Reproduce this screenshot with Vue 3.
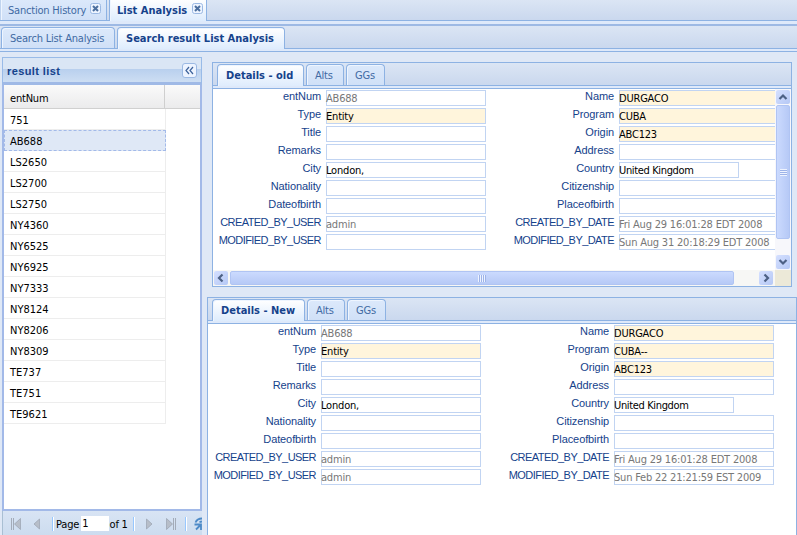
<script setup>
const rows = ['751', 'AB688', 'LS2650', 'LS2700', 'LS2750', 'NY4360', 'NY6525', 'NY6925', 'NY7333', 'NY8124', 'NY8206', 'NY8309', 'TE737', 'TE751', 'TE9621']

const buildFields = (v) => [
  { label: 'entNum', value: 'AB688', kind: 'disabled' },
  { label: 'Name', value: 'DURGACO', kind: 'required' },
  { label: 'Type', value: 'Entity', kind: 'required' },
  { label: 'Program', value: v.program, kind: 'required' },
  { label: 'Title', value: '' },
  { label: 'Origin', value: 'ABC123', kind: 'required' },
  { label: 'Remarks', value: '' },
  { label: 'Address', value: '' },
  { label: 'City', value: 'London,' },
  { label: 'Country', value: 'United Kingdom', kind: 'short' },
  { label: 'Nationality', value: '' },
  { label: 'Citizenship', value: '' },
  { label: 'Dateofbirth', value: '' },
  { label: 'Placeofbirth', value: '' },
  { label: 'CREATED_BY_USER', value: 'admin', kind: 'disabled caps' },
  { label: 'CREATED_BY_DATE', value: 'Fri Aug 29 16:01:28 EDT 2008', kind: 'disabled caps' },
  { label: 'MODIFIED_BY_USER', value: v.modifiedBy, kind: 'disabled caps' },
  { label: 'MODIFIED_BY_DATE', value: v.modifiedDate, kind: 'disabled caps' }
]

const panels = [
  { id: 'old', title: 'Details - old', scroll: true, fields: buildFields({ program: 'CUBA', modifiedBy: '', modifiedDate: 'Sun Aug 31 20:18:29 EDT 2008' }) },
  { id: 'new', title: 'Details - New', scroll: false, fields: buildFields({ program: 'CUBA--', modifiedBy: 'admin', modifiedDate: 'Sun Feb 22 21:21:59 EST 2009' }) }
]
</script>

<template>
  <div class="app">
    <div class="strip main-strip">
      <div class="tab t-history"><span>Sanction History</span>
        <svg class="close" viewBox="0 0 11 11"><rect x=".5" y=".5" width="10" height="10" rx="2" /><path d="M3 3l5 5M8 3l-5 5" /></svg>
      </div>
      <div class="tab active t-list"><span>List Analysis</span>
        <svg class="close" viewBox="0 0 11 11"><rect x=".5" y=".5" width="10" height="10" rx="2" /><path d="M3 3l5 5M8 3l-5 5" /></svg>
      </div>
    </div>
    <div class="spacer main-spacer"></div>
    <div class="strip sub-strip">
      <div class="tab t-search"><span>Search List Analysis</span></div>
      <div class="tab active t-result"><span>Search result List Analysis</span></div>
    </div>
    <div class="spacer"></div>

    <div class="body">
      <aside class="side">
        <header class="side-head">
          <span>result list</span>
          <svg class="collapse" viewBox="0 0 15 15"><rect x=".5" y=".5" width="14" height="14" rx="2.5" /><path d="M7 4L4 7.5 7 11M11 4L8 7.5 11 11" /></svg>
        </header>
        <div class="grid">
          <div class="grid-head"><span class="col">entNum</span></div>
          <div v-for="r in rows" :key="r" class="row" :class="{ selected: r === 'AB688' }">{{ r }}</div>
        </div>
        <footer class="paging">
          <svg class="nav first" viewBox="0 0 12 12"><path class="bar" d="M1.5 0v12M3.5 0v12" /><path class="tri" d="M10.5 .5v11L4.5 6z" /></svg>
          <svg class="nav prev" viewBox="0 0 12 12"><path class="tri" d="M8.5 1v10L3 6z" /></svg>
          <i class="sep"></i>
          <span class="page">Page</span><span class="page-no">1</span><span class="of">of 1</span>
          <i class="sep"></i>
          <svg class="nav next" viewBox="0 0 12 12"><path class="tri" d="M3.5 1v10L9 6z" /></svg>
          <svg class="nav last" viewBox="0 0 12 12"><path class="tri" d="M1.5 .5v11l6-5.500z" /><path class="bar" d="M8.500 0v12M10.500 0v12" /></svg>
          <i class="sep"></i>
          <svg class="refresh" viewBox="0 0 8 14"><path d="M8 1.500C5 1.500 2.500 3 1.500 5.500M.5 7.500h6.500V13M6.500 8L2 12.500" /><path d="M8 4.500L5.500 5" /></svg>
        </footer>
      </aside>

      <main class="details">
        <section v-for="p in panels" :key="p.id" class="panel" :class="p.id">
          <div class="strip panel-strip">
            <div class="tab active t-details"><span>{{ p.title }}</span></div>
            <div class="tab t-alts"><span>Alts</span></div>
            <div class="tab t-ggs"><span>GGs</span></div>
          </div>
          <div class="spacer"></div>
          <div class="viewport">
            <div class="form-clip">
              <div class="form">
                <div v-for="f in p.fields" :key="f.label" class="field" :class="f.kind">
                  <label>{{ f.label }}</label>
                  <div class="input">{{ f.value }}</div>
                </div>
              </div>
            </div>
            <template v-if="p.scroll">
              <div class="vbar">
                <svg class="sbtn" viewBox="0 0 14 14"><path d="M3.500 9L7 5.500 10.500 9" /></svg>
                <div class="thumb vthumb"><i></i></div>
                <svg class="sbtn end" viewBox="0 0 14 14"><path d="M3.500 5L7 8.500 10.500 5" /></svg>
              </div>
              <div class="hbar">
                <svg class="sbtn" viewBox="0 0 14 14"><path d="M8.500 3.500L5 7l3.500 3.500" /></svg>
                <div class="thumb hthumb"><i></i></div>
                <svg class="sbtn end" viewBox="0 0 14 14"><path d="M5.500 3.500L9 7l-3.500 3.500" /></svg>
              </div>
              <div class="corner"></div>
            </template>
          </div>
        </section>
      </main>
    </div>
  </div>
</template>

<style>
body { margin: 0; overflow: hidden; }
</style>

<style scoped>
* { box-sizing: border-box; }
.app { width: 797px; height: 535px; overflow: hidden; display: flex; flex-direction: column; background: #dfe8f6; font: 11px/14px "DejaVu Sans Condensed", "DejaVu Sans", sans-serif; font-stretch: condensed; color: #000; letter-spacing: -0.2px; }
svg { display: block; fill: none; flex: none; }
span { white-space: nowrap; }

.strip { display: flex; align-items: flex-end; flex: none; background: linear-gradient(#dbe5f4, #cad8ee); border-bottom: 1px solid #8db2e3; }
.main-strip { height: 21px; }
.sub-strip { height: 23px; padding-left: 1px; }
.spacer { flex: none; height: 3px; background: #dee9fa; border-bottom: 1px solid #8db2e3; }
.main-spacer { height: 5px; border-bottom: 2px solid #9db9e4; }
.tab { display: flex; align-items: center; height: 21px; flex: none; border: 1px solid #8db2e3; border-bottom: 0; border-radius: 4px 4px 0 0; background: linear-gradient(#dce9fb, #d0e0f7); box-shadow: inset 1px 1px #eef5ff; color: #416aa3; margin-right: 2px; padding-left: 8px; padding-top: 1px; }
.tab.active { height: 22px; margin-bottom: -1px; font-weight: bold; letter-spacing: 0; color: #15428b; background: linear-gradient(#fff, #deecfd); }
.main-strip .tab { border-top: 0; border-radius: 0; padding-top: 2px; }
.t-history { width: 107px; }
.main-strip .t-history { padding-left: 7px; border-left-color: #c0d4ef; }
.t-list { width: 98px; padding-left: 7px; }
.close { width: 11px; height: 11px; margin: -5px 5px 0 auto; }
.main-strip .t-list .close { margin-right: 3px; }
.close rect, .collapse rect { fill: #edf4ff; stroke: #9bb9e3; }
.close path { stroke: #4b6f9f; stroke-width: 2; }
.t-search { width: 114px; }
.t-result { width: 168px; }

.body { flex: 1; min-height: 0; display: flex; align-items: stretch; }
.side { width: 200px; margin: 5px 0 0 2px; flex: none; display: flex; flex-direction: column; }
.side-head { height: 28px; flex: none; display: flex; align-items: center; justify-content: space-between; padding: 1px 4px 0; border: 1px solid #99bbe8; border-bottom: 3px solid #9fb9e6; background: linear-gradient(#dae6f5 0 45%, #b9d0ee 47%, #cddef3); color: #15428b; font: bold 11px/14px "Liberation Sans", sans-serif; letter-spacing: 0.4px; }
.collapse { width: 15px; height: 15px; }
.collapse path { stroke: #3c629b; stroke-width: 1.2; }
.grid { flex: 1; background: #fff; border: 2px solid #a2b9e8; border-top: 0; }
.grid-head { height: 24px; display: flex; background: linear-gradient(#fafafa, #ebebec); border-bottom: 1px solid #d0d0d0; }
.col { width: 161px; padding: 7px 0 0 6px; border-right: 1px solid #cfcfcf; line-height: 13px; }
.row { height: 21px; width: 162px; padding: 5px 0 0 6px; border-bottom: 1px solid #ededed; border-right: 1px solid #ededed; letter-spacing: 0; }
.row.selected { background: #dfe8f6; border: 1px dashed #a3bae9; padding: 4px 0 0 5px; }
.paging { height: 24px; flex: none; display: flex; align-items: center; overflow: hidden; padding: 2px 0 0 7px; background: linear-gradient(#d8e4f4, #ccdcef); border-left: 1px solid #a9bfd3; }
.nav { width: 12px; height: 12px; }
.bar { stroke: #a3abb8; stroke-width: 1; }
.tri { fill: #b7bec9; stroke: #929ba8; stroke-width: .6; }
.prev { margin-left: 9px; }
.sep { width: 2px; height: 14px; flex: none; background: #98c8ff; border-right: 1px solid #fff; margin: 0 0 0 9px; }
.page { margin: 2px 0 0 2px; width: 26px; }
.page-no { background: #fff; width: 28px; height: 15px; line-height: 16px; padding-left: 1px; margin-bottom: 1px; }
.of { width: 20px; margin: 2px 0 0 1px; }
.of + .sep { margin-left: 4px; }
.next { margin-left: 8px; }
.last { margin-left: 10px; }
.last + .sep { margin-left: 8px; }
.refresh { width: 8px; height: 14px; margin-left: 7px; }
.refresh path { stroke: #4d8ac7; stroke-width: 1.8; }

.details { flex: 1; min-width: 0; padding-left: 5px; display: flex; flex-direction: column; }
.panel { display: flex; flex-direction: column; border: 1px solid #8db2e3; }
.panel.old { height: 225px; flex: none; margin: 10px 5px 10px 5px; }
.panel.new { flex: 1; border-bottom: 0; }
.panel-strip { height: 23px; padding-left: 4px; }
.panel-strip .tab { padding-top: 2px; }
.panel-strip .tab.active { padding-top: 0; }
.t-details { width: 87px; }
.t-alts { width: 38px; }
.t-ggs { width: 39px; }
.new .t-details { width: 93px; }
.viewport { flex: 1; min-height: 0; display: grid; grid-template-columns: 1fr; background: #fff; }
.old .viewport { grid-template: 181px 1fr / 1fr 16px; }
.form-clip { overflow: hidden; min-width: 0; }
.form { width: 586px; display: grid; grid-template-columns: 293px 293px; grid-auto-rows: 18px; padding-top: 1px; }
.field { display: flex; gap: 5px; }
label { width: 108px; flex: none; text-align: right; white-space: nowrap; color: #15428b; font: 11px/13px "Liberation Sans", sans-serif; letter-spacing: -0.1px; }
.caps label { letter-spacing: -0.56px; }
.input { width: 160px; height: 16px; flex: none; border: 1px solid #c1d4f2; line-height: 15px; white-space: nowrap; text-indent: -1px; }
.required .input { background: #fff5dc; }
.short .input { width: 120px; letter-spacing: -0.35px; }
.disabled .input { color: #777; }

.vbar { background: #f7f7fb; display: flex; flex-direction: column; align-items: center; padding: 1px 0; }
.hbar { background: #f7f7f5; display: flex; align-items: center; padding: 0 2px 0 1px; }
.sbtn { width: 14px; height: 14px; border-radius: 2px; background: linear-gradient(135deg, #d5e0ff, #b5c8f5); }
.sbtn path { stroke: #4d6185; stroke-width: 2.2; }
.vbar .end { margin-top: auto; }
.hbar .end { margin-left: auto; }
.thumb { display: flex; align-items: center; justify-content: center; border: 1px solid #b0c4f3; border-radius: 2px; }
.vthumb { width: 14px; height: 134px; margin-top: 1px; background: linear-gradient(90deg, #cbdafe, #b6c9f6); }
.hthumb { width: 504px; height: 14px; margin-left: 2px; background: linear-gradient(#cbdafe, #b6c9f6); }
.vthumb i { width: 7px; height: 7px; background: repeating-linear-gradient(#eef3ff 0 1px, #9db3e8 1px 2px); }
.hthumb i { width: 8px; height: 7px; background: repeating-linear-gradient(90deg, #eef3ff 0 1px, #9db3e8 1px 2px); }
.corner { background: #ece9d8; }
</style>
